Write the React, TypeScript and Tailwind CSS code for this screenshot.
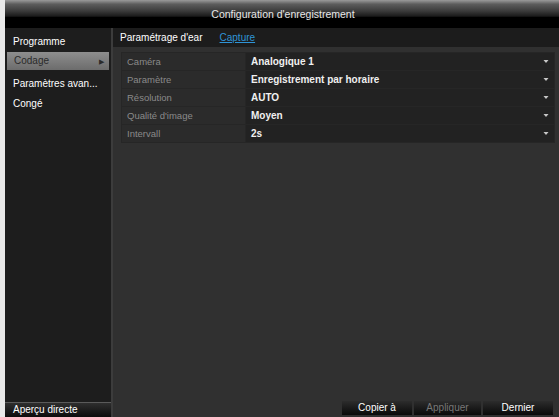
import React from "react";

const rows = [
  { label: "Caméra", value: "Analogique 1" },
  { label: "Paramètre", value: "Enregistrement par horaire" },
  { label: "Résolution", value: "AUTO" },
  { label: "Qualité d'image", value: "Moyen" },
  { label: "Intervall", value: "2s" },
];

function Caret() {
  return (
    <svg width="6" height="5" viewBox="0 0 6 5" className="shrink-0">
      <path d="M0.5 1 L5.5 1 L3 4 Z" fill="#c8c8c8" />
    </svg>
  );
}

export default function App() {
  return (
    <div
      className="flex h-[417px] w-[559px] overflow-hidden bg-[#e6e6e6] text-[10px] leading-none"
      style={{ fontFamily: '"Liberation Sans", Arial, sans-serif' }}
    >
      <div className="w-[5px] shrink-0 bg-[#e9e9e9]" />
      <div className="flex min-w-0 flex-1 flex-col">
        <div className="flex h-[28px] shrink-0 justify-center bg-[linear-gradient(to_bottom,#9a9a9a_0%,#5c5c5c_15%,#3a3a3a_40%,#1a1a1a_58%,#000_62%,#000_100%)] pl-[2px] pt-[9px]">
          <span className="text-[10.5px] text-[#e8e8e8]">Configuration d'enregistrement</span>
        </div>
        <div className="flex min-h-0 flex-1">
          <div className="flex w-[106px] shrink-0 flex-col bg-[#1d1d1d]">
            <div className="flex-1 pt-[4px]">
              <div className="flex h-[20px] items-center pl-[8px] text-white">Programme</div>
              <div className="mx-[2px] flex h-[18px] items-center justify-between bg-[linear-gradient(to_bottom,#8e8e8e,#6c6c6c)] pl-[7px] pr-[5px] text-[#2a2a2a]">
                <span>Codage</span>
                <span className="text-[7px]">▶</span>
              </div>
              <div className="mt-[4px] flex h-[20px] items-center pl-[8px] text-white">Paramètres avan...</div>
              <div className="flex h-[19px] items-center pl-[8px] text-white">Congé</div>
            </div>
            <div className="flex h-[15px] shrink-0 items-center border-t border-[#5a5a5a] bg-[linear-gradient(to_bottom,#2e2e2e,#0c0c0c)] pl-[8px] text-white">
              Aperçu directe
            </div>
          </div>
          <div className="w-[2px] shrink-0 bg-[#3c3c3c]" />
          <div className="flex min-w-0 flex-1 flex-col bg-[#303030]">
            <div className="flex h-[19px] shrink-0 items-center gap-[17px] bg-[#1c1c1c] pl-[7px]">
              <span className="text-white">Paramétrage d'ear</span>
              <span className="text-[#2f94d6] underline">Capture</span>
            </div>
            <div className="ml-[8px] mr-[4px] mt-[5px] flex flex-col gap-[1px] bg-[#262626] p-[1px]">
              {rows.map((r) => (
                <div key={r.label} className="flex h-[17px]">
                  <div className="flex w-[123px] items-center bg-[#2b2b2b] pl-[5px] text-[9.5px] text-[#8a8a8a]">
                    {r.label}
                  </div>
                  <div className="ml-[1px] flex flex-1 items-center justify-between bg-[#222] pl-[5px] pr-[5px] font-bold text-[#f0f0f0]">
                    <span>{r.value}</span>
                    <Caret />
                  </div>
                </div>
              ))}
            </div>
            <div className="flex-1" />
            <div className="mb-[2px] mr-[6px] flex justify-end gap-[2px]">
              {[
                { t: "Copier à", c: "text-white", w: "w-[70px]" },
                { t: "Appliquer", c: "text-[#777]", w: "w-[67px]" },
                { t: "Dernier", c: "text-white", w: "w-[70px]" },
              ].map((b) => (
                <div
                  key={b.t}
                  className={`flex h-[14px] items-center justify-center bg-[linear-gradient(to_bottom,#2c2c2c,#0a0a0a)] ${b.w} ${b.c}`}
                >
                  {b.t}
                </div>
              ))}
            </div>
          </div>
        </div>
      </div>
    </div>
  );
}
